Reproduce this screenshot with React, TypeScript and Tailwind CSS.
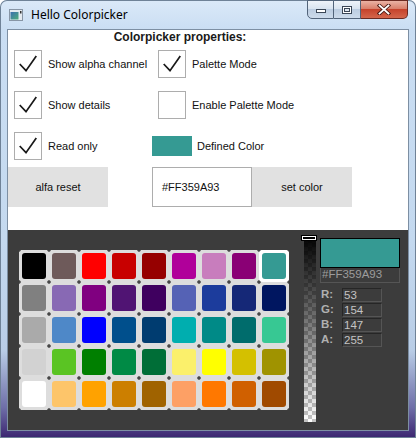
import React from 'react';

const palette: string[][] = [
  ['#000000', '#6e5a5a', '#ff0000', '#c80000', '#960000', '#b0009a', '#c87dbd', '#8a0075', '#359a93'],
  ['#808080', '#8869b4', '#800080', '#501473', '#3f005f', '#5562b5', '#1c3c9c', '#152877', '#001660'],
  ['#aaaaaa', '#4e88c8', '#0000ff', '#004f8c', '#003c70', '#00aeaf', '#008a87', '#006c6c', '#37c893'],
  ['#d2d2d2', '#5ac423', '#007f00', '#008a45', '#006e37', '#fbf06b', '#ffff00', '#d4c000', '#a09300'],
  ['#ffffff', '#fdc56a', '#ffa200', '#cc7f00', '#a06300', '#fda065', '#ff7800', '#d06000', '#a04a00'],
];

const CheckBox = ({ checked }: { checked: boolean }) => (
  <div className="w-[28px] h-[28px] shrink-0 border border-[#adadad] bg-white">
    {checked && (
      <svg width="26" height="26" viewBox="0 0 26 26">
        <path d="M4.7 13 L11 19.7 L21.3 5" fill="none" stroke="#1a1a1a" strokeWidth="1.7" />
      </svg>
    )}
  </div>
);

const Channel = ({ label, value }: { label: string; value: number }) => (
  <div className="flex h-[14px] items-center mb-[1px]">
    <span className="w-[22px] pl-[1px] font-bold text-[#b0b0b0]">{label}</span>
    <div className="w-[40px] h-[14px] border border-[#555555] border-t-[#262626] border-l-[#262626] pl-[1px] leading-[12px] text-[#c4c4c4]">
      {value}
    </div>
  </div>
);

const App: React.FC = () => {
  return (
    <div className="w-[416px] h-[438px] overflow-hidden rounded-t-[7px] flex flex-col font-['Liberation_Sans',Arial,sans-serif] text-[11px] text-[#111] bg-[linear-gradient(180deg,#dbe9f8_0px,#cadef3_29px,#c4d9ef_55%,#b9cde6_80%,#6f6fa8_93%,#3b2570_100%)] shadow-[inset_0_0_0_1px_#6f8297]">
      {/* Title bar */}
      <div className="h-[29px] flex items-start pl-[9px] pr-[8px]">
        <svg className="mt-[9px]" width="14" height="12" viewBox="0 0 14 12">
          <defs>
            <linearGradient id="ico" x1="0" y1="0" x2="1" y2="1">
              <stop offset="0" stopColor="#3b6fb0" />
              <stop offset="1" stopColor="#4fae7a" />
            </linearGradient>
          </defs>
          <rect x="0.5" y="0.5" width="13" height="11" fill="#e4eaf0" stroke="#8795a5" />
          <rect x="1.5" y="3" width="8" height="7.5" fill="url(#ico)" />
          <rect x="11" y="2" width="1.5" height="2.5" fill="#333" />
        </svg>
        <span className="ml-[8px] mt-[7px] font-['Noto_Sans',sans-serif] text-[12px] leading-[16px] text-black">
          Hello Colorpicker
        </span>
        <div className="ml-auto flex h-[20px]">
          <div className="w-[27px] h-[19px] border border-[#52647a] rounded-bl-[5px] flex items-center justify-center bg-[linear-gradient(180deg,#eef3f9,#d9e4f0_45%,#bccde1_50%,#cddbeb)]">
            <div className="mt-[3px] w-[10px] h-[4px] bg-white border border-[#3a4656]" />
          </div>
          <div className="w-[27px] h-[19px] border border-l-0 border-[#52647a] flex items-center justify-center bg-[linear-gradient(180deg,#eef3f9,#d9e4f0_45%,#bccde1_50%,#cddbeb)]">
            <div className="w-[10px] h-[8px] border border-[#3a4656] bg-white p-[1px]">
              <div className="w-full h-full border border-[#3a4656] bg-[#dfe7f0]" />
            </div>
          </div>
          <div className="w-[47px] h-[19px] border border-l-0 border-[#6b2a22] rounded-br-[5px] flex items-center justify-center bg-[linear-gradient(180deg,#eab2a4,#d9806c_45%,#c6432c_50%,#d4664c)]">
            <svg width="14" height="11" viewBox="0 0 14 11">
              <path d="M2.5 1.5 L11.5 9.5 M11.5 1.5 L2.5 9.5" stroke="#4a1a14" strokeWidth="3.6" strokeLinecap="square" />
              <path d="M2.5 1.5 L11.5 9.5 M11.5 1.5 L2.5 9.5" stroke="#ffffff" strokeWidth="1.8" strokeLinecap="square" />
            </svg>
          </div>
        </div>
      </div>

      {/* Client area */}
      <div className="ml-[7px] w-[402px] h-[402px] border border-[#7d8fa3] flex flex-col">
        <div className="h-[200px] bg-white">
          <div className="w-[344px] flex flex-col">
            <div className="h-[14px] leading-[14px] text-center font-bold text-[12px] text-[#1a1a1a]">
              Colorpicker properties:
            </div>

            <div className="mt-[6px] flex h-[28px] items-center">
              <div className="w-[144px] pl-[6px] flex items-center">
                <CheckBox checked />
                <span className="ml-[6px]">Show alpha channel</span>
              </div>
              <div className="pl-[6px] flex items-center">
                <CheckBox checked />
                <span className="ml-[6px]">Palette Mode</span>
              </div>
            </div>

            <div className="mt-[13px] flex h-[28px] items-center">
              <div className="w-[144px] pl-[6px] flex items-center">
                <CheckBox checked />
                <span className="ml-[6px]">Show details</span>
              </div>
              <div className="pl-[6px] flex items-center">
                <CheckBox checked={false} />
                <span className="ml-[6px]">Enable Palette Mode</span>
              </div>
            </div>

            <div className="mt-[13px] flex h-[28px] items-center">
              <div className="w-[144px] pl-[6px] flex items-center">
                <CheckBox checked />
                <span className="ml-[6px]">Read only</span>
              </div>
              <div className="flex items-center">
                <div className="w-[40px] h-[20px] bg-[#359a93]" />
                <span className="ml-[5px]">Defined Color</span>
              </div>
            </div>

            <div className="mt-[7px] flex h-[40px]">
              <div className="w-[100px] h-full bg-[#e1e1e1] flex items-center justify-center">alfa reset</div>
              <div className="w-[44px]" />
              <div className="w-[100px] h-full border border-[#adadad] bg-white flex items-center pl-[9px]">#FF359A93</div>
              <div className="w-[100px] h-full bg-[#e1e1e1] flex items-center justify-center">set color</div>
            </div>
          </div>
        </div>

        {/* Color picker */}
        <div className="flex-1 bg-[#3c3c3c] flex items-start">
          <div className="ml-[11px] mt-[20px] w-[270px] h-[160px] grid grid-cols-[repeat(9,30px)] grid-rows-[repeat(5,32px)] bg-[#dddddd] bg-[radial-gradient(circle,#464646_1.3px,transparent_2.2px)] [background-size:30px_32px] [background-position:-15px_-16px]">
            {palette.flat().map((c, i) => (
              <div
                key={i}
                className={i === 8 ? 'p-[3px] rounded-[4px] bg-white' : 'p-[3px]'}
              >
                <div className="w-full h-full rounded-[3px]" style={{ backgroundColor: c }} />
              </div>
            ))}
          </div>

          <div className="ml-[15px] mt-[5px] relative w-[12px] h-[187px] bg-[repeating-conic-gradient(#ffffff_0_25%,#c4c4c4_0_50%)] [background-size:8px_8px]">
            <div className="absolute inset-0 bg-[linear-gradient(180deg,#000000,rgba(0,0,0,0))]" />
            <div className="absolute left-[-3px] top-0 w-[16px] h-[6px] bg-black p-[1px]">
              <div className="w-full h-full border border-white bg-black" />
            </div>
          </div>

          <div className="ml-[4px] mt-[8px] w-[80px] flex flex-col">
            <div className="h-[30px] border border-black bg-[#359a93]" />
            <div className="h-[15px] border border-[#555555] border-t-0 pl-[1px] leading-[13px] text-[#9c9c9c] text-[11.5px]">
              #FF359A93
            </div>
            <div className="mt-[5px] text-[11.5px]">
              <Channel label="R:" value={53} />
              <Channel label="G:" value={154} />
              <Channel label="B:" value={147} />
              <Channel label="A:" value={255} />
            </div>
          </div>
        </div>
      </div>
    </div>
  );
};

export default App;
